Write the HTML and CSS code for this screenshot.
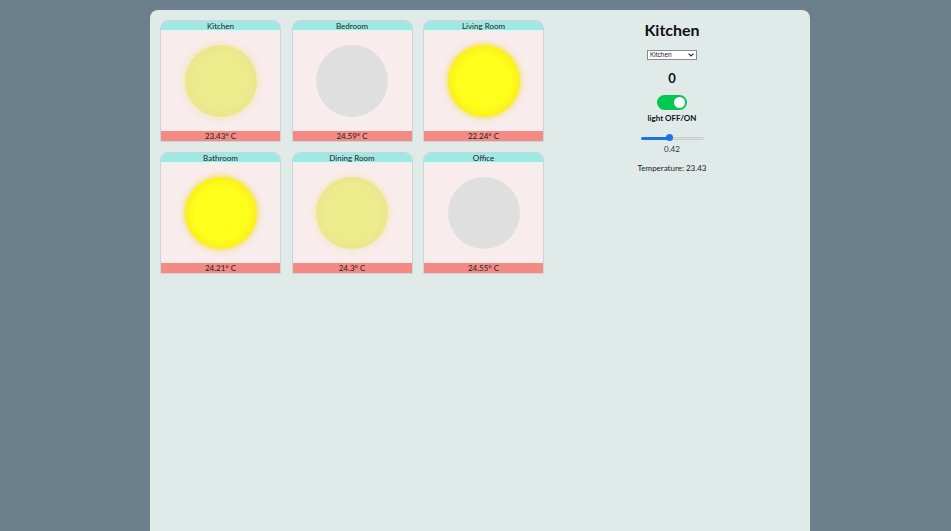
FILE: index.html
```html
<!DOCTYPE html>
<html>
<head>
<meta charset="utf-8">
<link rel="stylesheet" href="styles.css">
</head>
<body>
<div class="app">
  <div class="rooms">
    <div class="card">
      <div class="card-head">Kitchen</div>
      <div class="card-body"><div class="bulb"><div class="light" style="opacity:0.42"></div></div></div>
      <div class="card-foot">23.43° C</div>
    </div>
    <div class="card">
      <div class="card-head">Bedroom</div>
      <div class="card-body"><div class="bulb"></div></div>
      <div class="card-foot">24.59° C</div>
    </div>
    <div class="card">
      <div class="card-head">Living Room</div>
      <div class="card-body"><div class="bulb"><div class="light" style="opacity:1"></div></div></div>
      <div class="card-foot">22.24° C</div>
    </div>
    <div class="card">
      <div class="card-head">Bathroom</div>
      <div class="card-body"><div class="bulb"><div class="light" style="opacity:1"></div></div></div>
      <div class="card-foot">24.21° C</div>
    </div>
    <div class="card">
      <div class="card-head">Dining Room</div>
      <div class="card-body"><div class="bulb"><div class="light" style="opacity:0.42"></div></div></div>
      <div class="card-foot">24.3° C</div>
    </div>
    <div class="card">
      <div class="card-head">Office</div>
      <div class="card-body"><div class="bulb"></div></div>
      <div class="card-foot">24.55° C</div>
    </div>
  </div>
  <div class="panel">
    <h1 class="title">Kitchen</h1>
    <div class="picker-wrap">
      <select class="picker">
        <option>Kitchen</option>
        <option>Bedroom</option>
        <option>Living Room</option>
        <option>Bathroom</option>
        <option>Dining Room</option>
        <option>Office</option>
      </select>
      <svg class="chev" width="6" height="4" viewBox="0 0 6 4"><path d="M0.6 0.6 L3 3 L5.4 0.6" fill="none" stroke="#222" stroke-width="1.1"/></svg>
    </div>
    <div class="count">0</div>
    <div class="toggle"><div class="knob"></div></div>
    <div class="toggle-label">light OFF/ON</div>
    <div class="slider"><div class="fill"></div><div class="thumb"></div></div>
    <div class="value">0.42</div>
    <div class="temp">Temperature: 23.43</div>
  </div>
</div>
</body>
</html>
```

FILE: styles.css
```css
html, body {
  margin: 0;
  padding: 0;
  background: #6c7f8c;
  font-family: Lato, "Open Sans", sans-serif;
  color: #111;
}
.app {
  width: 660px;
  height: 540px;
  margin: 10px 0 0 150px;
  background: #dfeae9;
  border-radius: 8px 8px 0 0;
  box-sizing: border-box;
  padding: 10px;
  display: flex;
}
.rooms {
  display: grid;
  grid-template-columns: repeat(3, 121px);
  grid-auto-rows: 122px;
  column-gap: 10.5px;
  row-gap: 10px;
  align-content: start;
}
.card {
  display: flex;
  flex-direction: column;
  border: 1px solid #cdd3d8;
  border-radius: 8px 8px 0 0;
  overflow: hidden;
  background: #f8ecec;
}
.card-head {
  height: 9px;
  line-height: 10px;
  background: #a0e8e4;
  border-bottom: 1px solid #cfe;
  text-align: center;
  font-size: 8px;
  color: #222;
}
.card-body {
  flex: 1;
  display: flex;
  align-items: center;
  justify-content: center;
}
.card-foot {
  height: 10px;
  line-height: 11px;
  background: #f48a84;
  text-align: center;
  font-size: 8px;
  color: #222;
}
.bulb {
  width: 72px;
  height: 72px;
  border-radius: 50%;
  background: #e0dfe0;
  position: relative;
}
.light {
  position: absolute;
  inset: 0;
  border-radius: 50%;
  background: radial-gradient(circle, #ffff1c 50%, #f2dc18 100%);
  box-shadow: 0 0 5px 2px rgba(250, 215, 0, 0.5);
}
.panel {
  flex: 1;
  display: flex;
  flex-direction: column;
  align-items: center;
}
.title {
  margin: 0;
  font-size: 16px;
  line-height: 20px;
  font-weight: 700;
}
.picker-wrap {
  margin-top: 10px;
  position: relative;
  width: 50px;
  height: 10px;
}
.picker {
  appearance: none;
  -webkit-appearance: none;
  display: block;
  box-sizing: border-box;
  width: 50px;
  height: 10px;
  font-size: 6.5px;
  line-height: 8px;
  padding: 0 0 0 2px;
  font-family: "Liberation Sans", sans-serif;
  color: #222;
  border: 1px solid #8a8a8a;
  border-radius: 0;
  background: #fff;
}
.chev {
  position: absolute;
  right: 3px;
  top: 3px;
}
.count {
  margin-top: 10px;
  font-size: 13px;
  font-weight: 700;
  line-height: 16px;
}
.toggle {
  margin-top: 9px;
  width: 30px;
  height: 15px;
  border-radius: 8px;
  background: #00c853;
  position: relative;
}
.knob {
  position: absolute;
  right: 2px;
  top: 2px;
  width: 11px;
  height: 11px;
  border-radius: 50%;
  background: #fff;
}
.toggle-label {
  margin-top: 3px;
  font-size: 8px;
  font-weight: 700;
  line-height: 10px;
}
.slider {
  margin-top: 14px;
  width: 63px;
  height: 3px;
  border-radius: 2px;
  background: #dcdcdc;
  border: 1px solid #ccc;
  box-sizing: border-box;
  position: relative;
}
.fill {
  position: absolute;
  left: -1px;
  top: -1px;
  height: 3px;
  width: 28px;
  background: #1a73e8;
  border-radius: 2px;
}
.thumb {
  position: absolute;
  left: 24px;
  top: -4px;
  width: 7px;
  height: 7px;
  border-radius: 50%;
  background: #1a73e8;
}
.value {
  margin-top: 4px;
  font-size: 8px;
  line-height: 10px;
  color: #333;
}
.temp {
  margin-top: 9px;
  font-size: 8px;
  line-height: 10px;
  color: #222;
}
```
